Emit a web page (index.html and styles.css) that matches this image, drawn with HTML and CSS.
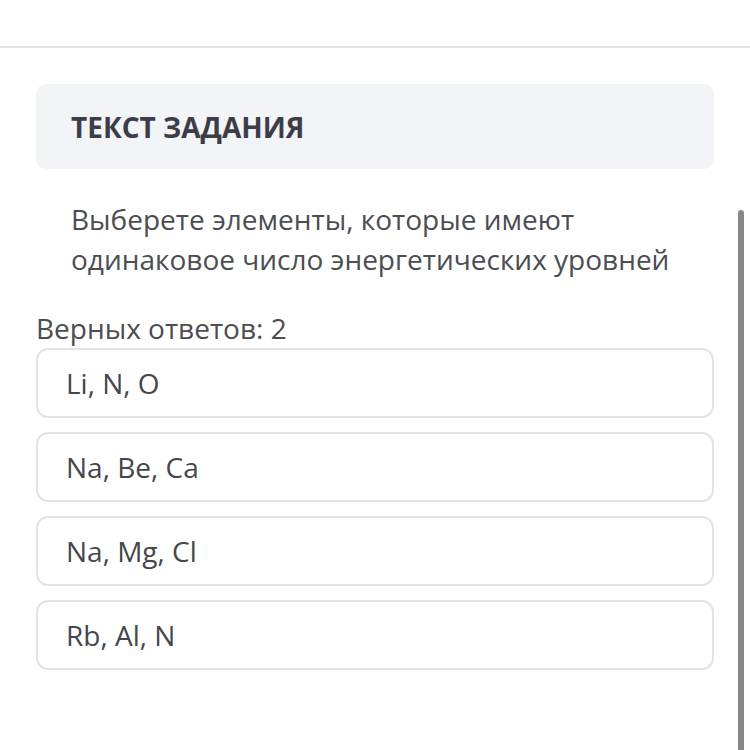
FILE: index.html
```html
<!DOCTYPE html>
<html lang="ru">
<head>
<meta charset="utf-8">
<link rel="stylesheet" href="styles.css">
</head>
<body>
<div class="topbar"></div>
<main class="content">
  <div class="task-head">ТЕКСТ ЗАДАНИЯ</div>
  <p class="question">Выберете элементы, которые имеют одинаковое число энергетических уровней</p>
  <div class="count">Верных ответов: 2</div>
  <ul class="options">
    <li class="option">Li, N, O</li>
    <li class="option">Na, Be, Ca</li>
    <li class="option">Na, Mg, Cl</li>
    <li class="option">Rb, Al, N</li>
  </ul>
</main>
<div class="scrollbar"></div>
</body>
</html>
```
FILE: styles.css
```css
html, body {
  margin: 0;
  padding: 0;
  background: #ffffff;
  width: 750px;
  height: 750px;
  overflow: hidden;
}
body {
  font-family: "Open Sans", "Noto Sans", sans-serif;
  color: #4a4c52;
  position: relative;
}
.topbar {
  height: 46px;
  border-bottom: 2px solid #e3e3e5;
}
.content {
  padding: 36px 36px 0 36px;
}
.task-head {
  background: #f3f4f7;
  border-radius: 10px;
  height: 85px;
  box-sizing: border-box;
  padding: 0 35px;
  display: flex;
  align-items: center;
  font-weight: 700;
  font-size: 28px;
  color: #3b3e48;
}
.question {
  margin: 0;
  padding: 30px 35px 0 35px;
  font-size: 28px;
  line-height: 40px;
  color: #4b4d53;
}
.count {
  margin-top: 32px;
  font-size: 28px;
  line-height: 34px;
  color: #4b4d53;
}
.options {
  list-style: none;
  margin: 3px 0 0;
  padding: 0;
  display: flex;
  flex-direction: column;
  gap: 14px;
}
.option {
  height: 70px;
  box-sizing: border-box;
  border: 2px solid #e3e3e5;
  border-radius: 12px;
  display: flex;
  align-items: center;
  padding: 0 28px;
  font-size: 28px;
  color: #45474d;
}
.scrollbar {
  position: absolute;
  right: 6px;
  top: 210px;
  width: 6px;
  height: 560px;
  background: #888888;
  border-radius: 3px;
}
```
